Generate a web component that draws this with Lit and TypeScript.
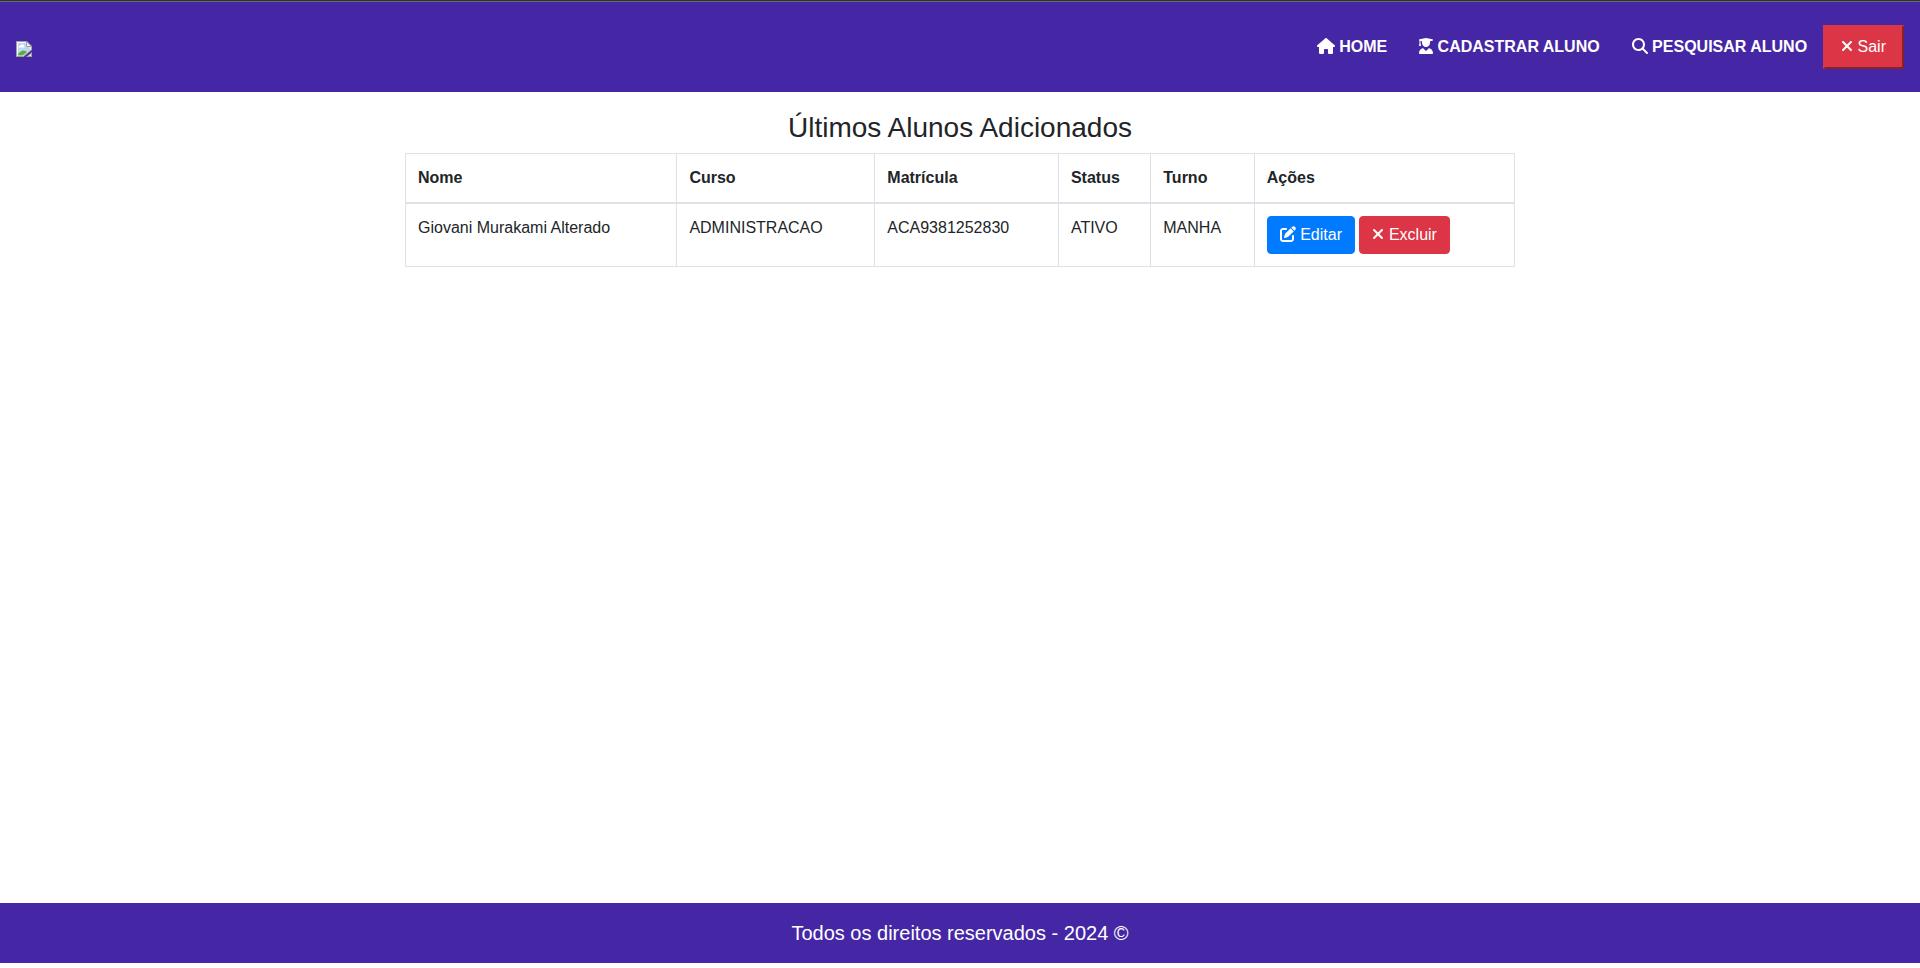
import { LitElement, html, css, svg } from "lit";
import { customElement, property } from "lit/decorators.js";

const ICONS: Record<string, { width: number; path: string }> = {
  house: {
    width: 576,
    path: "M575.8 255.5c0 18-15 32.1-32 32.1h-32l.7 160.2c0 2.7-.2 5.4-.5 8.1V472c0 22.1-17.9 40-40 40H456c-1.1 0-2.2 0-3.3-.1c-1.4 .1-2.8 .1-4.2 .1H416 392c-22.1 0-40-17.9-40-40V448 384c0-17.7-14.3-32-32-32H256c-17.7 0-32 14.3-32 32v64 24c0 22.1-17.9 40-40 40H160 128.1c-1.5 0-3-.1-4.5-.2c-1.2 .1-2.4 .2-3.6 .2H104c-22.1 0-40-17.9-40-40V360c0-.9 0-1.9 .1-2.8V287.6H32c-18 0-32-14-32-32.1c0-9 3-17 10-24L266.4 8c7-7 15-8 22-8s15 2 21 7L564.8 231.5c8 7 12 15 11 24z",
  },
  graduate: {
    width: 448,
    path: "M219.3 .5c3.1-.6 6.3-.6 9.4 0l200 40C439.9 42.7 448 52.6 448 64s-8.1 21.3-19.3 23.5L352 102.9V160c0 70.7-57.3 128-128 128s-128-57.3-128-128V102.9L48 93.3v65.1l15.7 78.4c.9 4.7-.3 9.6-3.3 13.3s-7.6 5.9-12.4 5.9H16c-4.8 0-9.3-2.1-12.4-5.9s-4.3-8.6-3.3-13.3L16 158.4V86.6C6.5 83.3 0 74.3 0 64C0 52.6 8.1 42.7 19.3 40.5l200-40zM111.9 327.7c10.5-3.4 21.8 .4 29.4 8.5l71 75.5c6.3 6.7 17 6.7 23.3 0l71-75.5c7.6-8.1 18.9-11.9 29.4-8.5C401 348.6 448 409.4 448 481.3c0 17-13.8 30.7-30.7 30.7H30.7C13.8 512 0 498.2 0 481.3c0-71.9 47-132.7 111.9-153.6z",
  },
  search: {
    width: 512,
    path: "M416 208c0 45.9-14.9 88.3-40 122.7L502.6 457.4c12.5 12.5 12.5 32.8 0 45.3s-32.8 12.5-45.3 0L330.7 376c-34.4 25.2-76.8 40-122.7 40C93.1 416 0 322.9 0 208S93.1 0 208 0S416 93.1 416 208zM208 352a144 144 0 1 0 0-288 144 144 0 1 0 0 288z",
  },
  close: {
    width: 384,
    path: "M342.6 150.6c12.5-12.5 12.5-32.8 0-45.3s-32.8-12.5-45.3 0L192 210.7 86.6 105.4c-12.5-12.5-32.8-12.5-45.3 0s-12.5 32.8 0 45.3L146.7 256 41.4 361.4c-12.5 12.5-12.5 32.8 0 45.3s32.8 12.5 45.3 0L192 301.3 297.4 406.6c12.5 12.5 32.8 12.5 45.3 0s12.5-32.8 0-45.3L237.3 256 342.6 150.6z",
  },
  edit: {
    width: 512,
    path: "M471.6 21.7c-21.9-21.9-57.3-21.9-79.2 0L362.3 51.7l97.9 97.9 30.1-30.1c21.9-21.9 21.9-57.3 0-79.2L471.6 21.7zm-299.2 220c-6.1 6.1-10.8 13.6-13.5 21.9l-29.6 88.8c-2.9 8.6-.6 18.1 5.8 24.6s15.9 8.7 24.6 5.8l88.8-29.6c8.2-2.7 15.7-7.4 21.9-13.5L437.7 172.3 339.7 74.3 172.4 241.7zM96 64C43 64 0 107 0 160V416c0 53 43 96 96 96H352c53 0 96-43 96-96V320c0-17.7-14.3-32-32-32s-32 14.3-32 32v96c0 17.7-14.3 32-32 32H96c-17.7 0-32-14.3-32-32V160c0-17.7 14.3-32 32-32h96c17.7 0 32-14.3 32-32s-14.3-32-32-32H96z",
  },
};

@customElement("app-icon")
export class AppIcon extends LitElement {
  @property() name = "house";

  static styles = css`
    :host {
      display: inline-block;
      line-height: 1;
      vertical-align: -2px;
    }
    .glyph {
      display: block;
      height: 16px;
      fill: currentColor;
    }
  `;

  render() {
    const icon = ICONS[this.name];
    return html`<svg class="glyph" viewBox="0 0 ${icon.width} 512" width=${icon.width / 32} height="16" aria-hidden="true">
      ${svg`<path d=${icon.path}></path>`}
    </svg>`;
  }
}

interface Aluno {
  nome: string;
  curso: string;
  matricula: string;
  status: string;
  turno: string;
}

@customElement("app-root")
export class AppRoot extends LitElement {
  @property({ attribute: false }) alunos: Aluno[] = [
    {
      nome: "Giovani Murakami Alterado",
      curso: "ADMINISTRACAO",
      matricula: "ACA9381252830",
      status: "ATIVO",
      turno: "MANHA",
    },
  ];

  static styles = css`
    :host {
      display: flex;
      flex-direction: column;
      box-sizing: border-box;
      min-height: 100vh;
      padding-bottom: 5px;
      background: #fff;
      color: #212529;
      font: 16px/24px "Liberation Sans", Arial, sans-serif;
    }
    * {
      box-sizing: border-box;
    }
    .topbar {
      display: flex;
      align-items: center;
      justify-content: space-between;
      padding: 23px 16px;
      border-top: 1px solid #6a6a6a;
      background: #4527a5;
    }
    .edge {
      height: 1px;
      background: #333;
    }
    .brand {
      display: block;
      padding-top: 4px;
    }
    .brand-image {
      display: block;
    }
    .menu {
      display: flex;
      align-items: center;
    }
    .link {
      padding: 8px 16px;
      color: #fff;
      font-weight: 700;
      text-decoration: none;
    }
    .exit {
      padding: 8px 16px;
      border: 2px outset #dc3545;
      background: #dc3545;
      color: #fff;
      font: inherit;
    }
    .content {
      flex: 1;
      width: 100%;
      max-width: 1140px;
      margin: 0 auto;
      padding: 19px 15px 0;
    }
    .title {
      margin: 0 0 8px;
      font-size: 28px;
      font-weight: 400;
      line-height: 34px;
      text-align: center;
    }
    .table {
      width: 100%;
      border: 1px solid #dee2e6;
      border-collapse: collapse;
    }
    .cell {
      padding: 12px;
      border: 1px solid #dee2e6;
      text-align: left;
      vertical-align: top;
    }
    .head {
      border-bottom-width: 2px;
      font-weight: 700;
    }
    .btn {
      padding: 6px 12px;
      border: 1px solid transparent;
      border-radius: 4px;
      color: #fff;
      font: inherit;
    }
    .primary {
      background: #007bff;
      border-color: #007bff;
    }
    .danger {
      background: #dc3545;
      border-color: #dc3545;
    }
    .footer {
      padding: 15px;
      background: #4527a5;
      color: #fff;
      font-size: 20px;
      line-height: 30px;
      text-align: center;
    }
  `;

  render() {
    return html`
      <div class="edge"></div>
      <header class="topbar">
        <a class="brand" href="#" aria-label="Início">
          <svg class="brand-image" width="16" height="16" viewBox="0 0 16 16" aria-hidden="true">
            <path d="M0 0H11L16 5V9L7.500 16H0Z" fill="#a0a0a0"></path>
            <path d="M1 1H10.500L15 5.500V8.500L7 15H1Z" fill="#f4f7fc"></path>
            <path d="M2 2H10V6H14V9L8 14H2Z" fill="#c3d5f5"></path>
            <path d="M2.500 6.500Q2.500 4.500 4.500 4.500Q5.500 2.500 7 3.500Q8.500 4 8.500 6.500Z" fill="#fff"></path>
            <path d="M2 14.500V13Q5 9.500 7.500 9.500Q9.500 9.500 11 11L6.500 14.500Z" fill="#55b03c"></path>
            <path d="M10.500 .5V5.500H15.500Z" fill="#f0f0f0" stroke="#a0a0a0"></path>
            <path d="M16 11V16H10Z" fill="#a0a0a0"></path>
            <path d="M15 13V15H12.500Z" fill="#eef5ec"></path>
          </svg>
        </a>
        <nav class="menu">
          <a class="link" href="#"><app-icon name="house"></app-icon> HOME</a>
          <a class="link" href="#"><app-icon name="graduate"></app-icon> CADASTRAR ALUNO</a>
          <a class="link" href="#"><app-icon name="search"></app-icon> PESQUISAR ALUNO</a>
          <button class="exit" type="button"><app-icon name="close"></app-icon> Sair</button>
        </nav>
      </header>
      <main class="content">
        <h1 class="title">Últimos Alunos Adicionados</h1>
        <table class="table">
          <thead>
            <tr>
              ${["Nome", "Curso", "Matrícula", "Status", "Turno", "Ações"].map(
                (label) => html`<th class="cell head" scope="col">${label}</th>`
              )}
            </tr>
          </thead>
          <tbody>
            ${this.alunos.map(
              (aluno) => html`<tr>
                <td class="cell">${aluno.nome}</td>
                <td class="cell">${aluno.curso}</td>
                <td class="cell">${aluno.matricula}</td>
                <td class="cell">${aluno.status}</td>
                <td class="cell">${aluno.turno}</td>
                <td class="cell">
                  <button class="btn primary" type="button"><app-icon name="edit"></app-icon> Editar</button>
                  <button class="btn danger" type="button"><app-icon name="close"></app-icon> Excluir</button>
                </td>
              </tr>`
            )}
          </tbody>
        </table>
      </main>
      <footer class="footer">Todos os direitos reservados - 2024 ©</footer>
    `;
  }
}
